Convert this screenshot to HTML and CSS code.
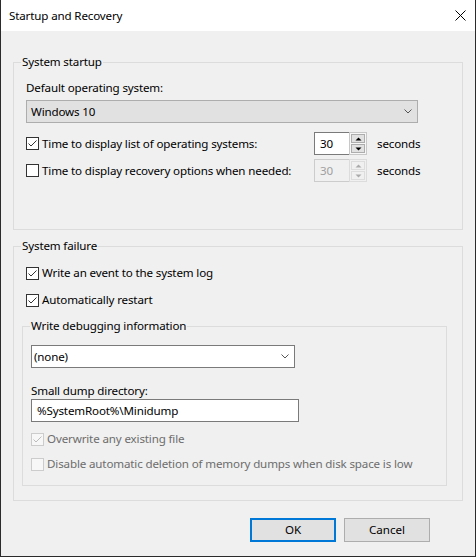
FILE: index.html
```html
<!DOCTYPE html>
<html lang="en">
<head>
<meta charset="utf-8">
<title>Startup and Recovery</title>
<link rel="stylesheet" href="styles.css">
</head>
<body>
<div class="window">
  <div class="titlebar">
    <span class="title">Startup and Recovery</span>
    <span class="close" aria-label="Close">
      <svg width="11" height="11" viewBox="0 0 11 11"><path d="M0.5 0.5 L10.5 10.5 M10.5 0.5 L0.5 10.5" stroke="#000" stroke-width="1" fill="none"/></svg>
    </span>
  </div>
  <div class="content">
    <fieldset class="group g1">
      <legend>System startup</legend>
      <div class="field-label">Default operating system:</div>
      <div class="combo combo-gray">
        <span>Windows 10</span>
        <svg class="chev" width="8" height="5" viewBox="0 0 8 5"><path d="M0.5 0.5 L4 4 L7.5 0.5" stroke="#555" fill="none"/></svg>
      </div>
      <div class="row row1">
        <label class="check">
          <span class="box"><svg width="11" height="11" viewBox="0 0 11 11"><path d="M1.5 5.5 L4 8 L9.5 2.5" stroke="#333" fill="none"/></svg></span>
          <span>Time to display list of operating systems:</span>
        </label>
        <div class="spin">
          <span class="spin-val">30</span>
          <span class="spin-btns">
            <span class="sbtn"><svg width="7" height="4" viewBox="0 0 7 4"><path d="M0.5 3.5 L3.5 0.5 L6.5 3.5Z" fill="#000"/></svg></span>
            <span class="sbtn"><svg width="7" height="4" viewBox="0 0 7 4"><path d="M0.5 0.5 L3.5 3.5 L6.5 0.5Z" fill="#000"/></svg></span>
          </span>
        </div>
        <span class="unit">seconds</span>
      </div>
      <div class="row row2">
        <label class="check">
          <span class="box"></span>
          <span>Time to display recovery options when needed:</span>
        </label>
        <div class="spin disabled">
          <span class="spin-val">30</span>
          <span class="spin-btns">
            <span class="sbtn"><svg width="7" height="4" viewBox="0 0 7 4"><path d="M0.5 3.5 L3.5 0.5 L6.5 3.5Z" fill="#aaa"/></svg></span>
            <span class="sbtn"><svg width="7" height="4" viewBox="0 0 7 4"><path d="M0.5 0.5 L3.5 3.5 L6.5 0.5Z" fill="#aaa"/></svg></span>
          </span>
        </div>
        <span class="unit">seconds</span>
      </div>
    </fieldset>

    <fieldset class="group g2">
      <legend>System failure</legend>
      <label class="check crow crow1">
        <span class="box"><svg width="11" height="11" viewBox="0 0 11 11"><path d="M1.5 5.5 L4 8 L9.5 2.5" stroke="#333" fill="none"/></svg></span>
        <span>Write an event to the system log</span>
      </label>
      <label class="check crow crow2">
        <span class="box"><svg width="11" height="11" viewBox="0 0 11 11"><path d="M1.5 5.5 L4 8 L9.5 2.5" stroke="#333" fill="none"/></svg></span>
        <span>Automatically restart</span>
      </label>

      <fieldset class="group g3">
        <legend>Write debugging information</legend>
        <div class="combo combo-white">
          <span>(none)</span>
          <svg class="chev" width="8" height="5" viewBox="0 0 8 5"><path d="M0.5 0.5 L4 4 L7.5 0.5" stroke="#555" fill="none"/></svg>
        </div>
        <div class="field-label dump-label">Small dump directory:</div>
        <div class="textbox">%SystemRoot%\Minidump</div>
        <label class="check crow dis dis1">
          <span class="box"><svg width="11" height="11" viewBox="0 0 11 11"><path d="M1.5 5.5 L4 8 L9.5 2.5" stroke="#bcbcbc" fill="none"/></svg></span>
          <span>Overwrite any existing file</span>
        </label>
        <label class="check crow dis dis2">
          <span class="box"></span>
          <span>Disable automatic deletion of memory dumps when disk space is low</span>
        </label>
      </fieldset>
    </fieldset>

    <div class="buttons">
      <button class="btn btn-default">OK</button>
      <button class="btn">Cancel</button>
    </div>
  </div>
</div>
</body>
</html>
```

FILE: styles.css
```css
* { box-sizing: border-box; }

html, body {
  margin: 0;
  height: 100%;
}

body {
  font-family: "Noto Sans", sans-serif;
  font-size: 11.6px;
  letter-spacing: -0.15px;
  line-height: 16px;
  color: #000;
  background: #f0f0f0;
}

.window {
  width: 476px;
  height: 557px;
  border: 1px solid #2b2b2b;
  border-top: none;
  background: #f0f0f0;
  display: flex;
  flex-direction: column;
}

.titlebar {
  height: 31px;
  flex: none;
  background: #fff;
  display: flex;
  align-items: center;
  justify-content: space-between;
  padding: 0 9px 0 8px;
}

.close {
  display: flex;
  width: 11px;
  height: 11px;
  margin-top: -1px;
}

.content {
  flex: 1;
  padding-top: 23px;
}

.group {
  margin: 0 12px;
  border: 1px solid #dcdcdc;
  padding: 10px 12px 0;
  min-width: 0;
}

.group legend {
  padding: 0 1px;
  margin-left: -5px;
  line-height: 16px;
}

.g1 {
  padding-bottom: 47px;
}

.field-label {
  height: 16px;
}

.combo {
  height: 23px;
  display: flex;
  align-items: center;
  justify-content: space-between;
}

.combo-gray {
  width: 392px;
  margin-top: 4px;
  border: 1px solid #adadad;
  background: #e1e1e1;
  padding: 0 5px 0 4px;
}

.combo-white {
  width: 264px;
  border: 1px solid #7a7a7a;
  background: #fff;
  padding: 0 5px 0 2px;
}

.row {
  display: grid;
  grid-template-columns: 278px 53px auto;
  column-gap: 10px;
  align-items: center;
  height: 23px;
}

.row1 { margin-top: 9px; }
.row2 { margin-top: 4px; }

.check {
  display: flex;
  align-items: center;
  gap: 3px;
  white-space: nowrap;
}

.box {
  width: 13px;
  height: 13px;
  flex: none;
  border: 1px solid #333;
  background: #fff;
  display: flex;
}

.spin {
  display: flex;
  height: 23px;
  width: 53px;
}

.spin-val {
  flex: 1;
  border: 1px solid #7a7a7a;
  border-right: none;
  background: #fff;
  padding-left: 5px;
  line-height: 21px;
}

.spin-btns {
  width: 18px;
  display: flex;
  flex-direction: column;
  gap: 1px;
  padding: 1px;
  border: 1px solid #c8c8c8;
  background: #f7f7f7;
}

.sbtn {
  flex: 1;
  display: flex;
  align-items: center;
  justify-content: center;
  background: #e1e1e1;
  border: 1px solid #adadad;
}

.spin.disabled .spin-val {
  border-color: #cccccc;
  background: #f0f0f0;
  color: #a0a0a0;
}

.spin.disabled .spin-btns {
  border-color: #dcdcdc;
  background: #f0f0f0;
}

.spin.disabled .sbtn {
  background: #f0f0f0;
  border-color: #dcdcdc;
}

.g2 {
  margin-top: 8px;
  padding: 11px 15px 14px 12px;
}

.crow { height: 16px; }
.crow2 { margin-top: 11px; }

.g3 {
  margin: 10px 0 0 -4px;
  padding: 11px 8px 13px;
}

.g3 legend {
  margin-left: -1px;
}

.dump-label { margin-top: 15px; }

.textbox {
  width: 268px;
  height: 23px;
  border: 1px solid #7a7a7a;
  background: #fff;
  padding-left: 5px;
  line-height: 21px;
}

.dis { color: #6d6d6d; }
.dis .box {
  border-color: #cccccc;
  background: #f7f7f7;
}
.dis1 { margin-top: 9px; }
.dis2 { margin-top: 9px; }

.buttons {
  display: flex;
  justify-content: flex-end;
  gap: 8px;
  margin-top: 17px;
  padding-right: 45px;
}

.btn {
  width: 86px;
  height: 24px;
  padding: 0;
  font: inherit;
  color: #000;
  border: 1px solid #adadad;
  background: #e1e1e1;
}

.btn-default {
  border: 2px solid #0078d7;
}
```
